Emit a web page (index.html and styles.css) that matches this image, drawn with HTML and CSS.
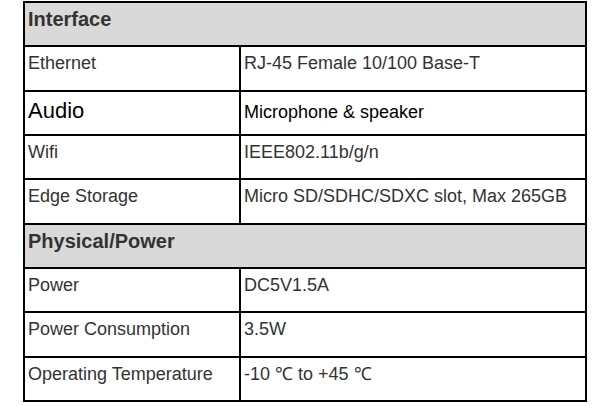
FILE: index.html
```html
<!DOCTYPE html>
<html>
<head>
<meta charset="utf-8">
<link rel="stylesheet" href="styles.css">
</head>
<body>
<div class="spec">
  <div class="cell head">Interface</div>
  <div class="cell">Ethernet</div>
  <div class="cell">RJ-45 Female 10/100 Base-T</div>
  <div class="cell big">Audio</div>
  <div class="cell black">Microphone &amp; speaker</div>
  <div class="cell">Wifi</div>
  <div class="cell">IEEE802.11b/g/n</div>
  <div class="cell">Edge Storage</div>
  <div class="cell">Micro SD/SDHC/SDXC slot, Max 265GB</div>
  <div class="cell head">Physical/Power</div>
  <div class="cell">Power</div>
  <div class="cell">DC5V1.5A</div>
  <div class="cell">Power Consumption</div>
  <div class="cell">3.5W</div>
  <div class="cell">Operating Temperature</div>
  <div class="cell">-10 ℃ to +45 ℃</div>
</div>
</body>
</html>
```
FILE: styles.css
```css
html, body {
  margin: 0;
  padding: 0;
  background: #fff;
}
body {
  font-family: "Liberation Sans", Arial, sans-serif;
}
.spec {
  display: grid;
  grid-template-columns: 216px 346px;
  grid-auto-rows: 44.35px;
  width: 564px;
  margin: 1px 0 0 23px;
  border-top: 2px solid #000;
  border-left: 2px solid #000;
  box-sizing: border-box;
}
.cell {
  box-sizing: border-box;
  border-right: 2px solid #000;
  border-bottom: 2px solid #000;
  padding: 6px 0 0 3px;
  font-size: 18px;
  line-height: 20px;
  color: #333;
  white-space: nowrap;
}
.head {
  grid-column: 1 / span 2;
  background: #d9d9d9;
  font-size: 20px;
  line-height: 22px;
  font-weight: bold;
  padding-top: 5px;
}
.big {
  font-size: 22px;
  line-height: 24px;
  padding-top: 7px;
  color: #000;
}
.black {
  color: #000;
  padding-top: 10px;
}
```
